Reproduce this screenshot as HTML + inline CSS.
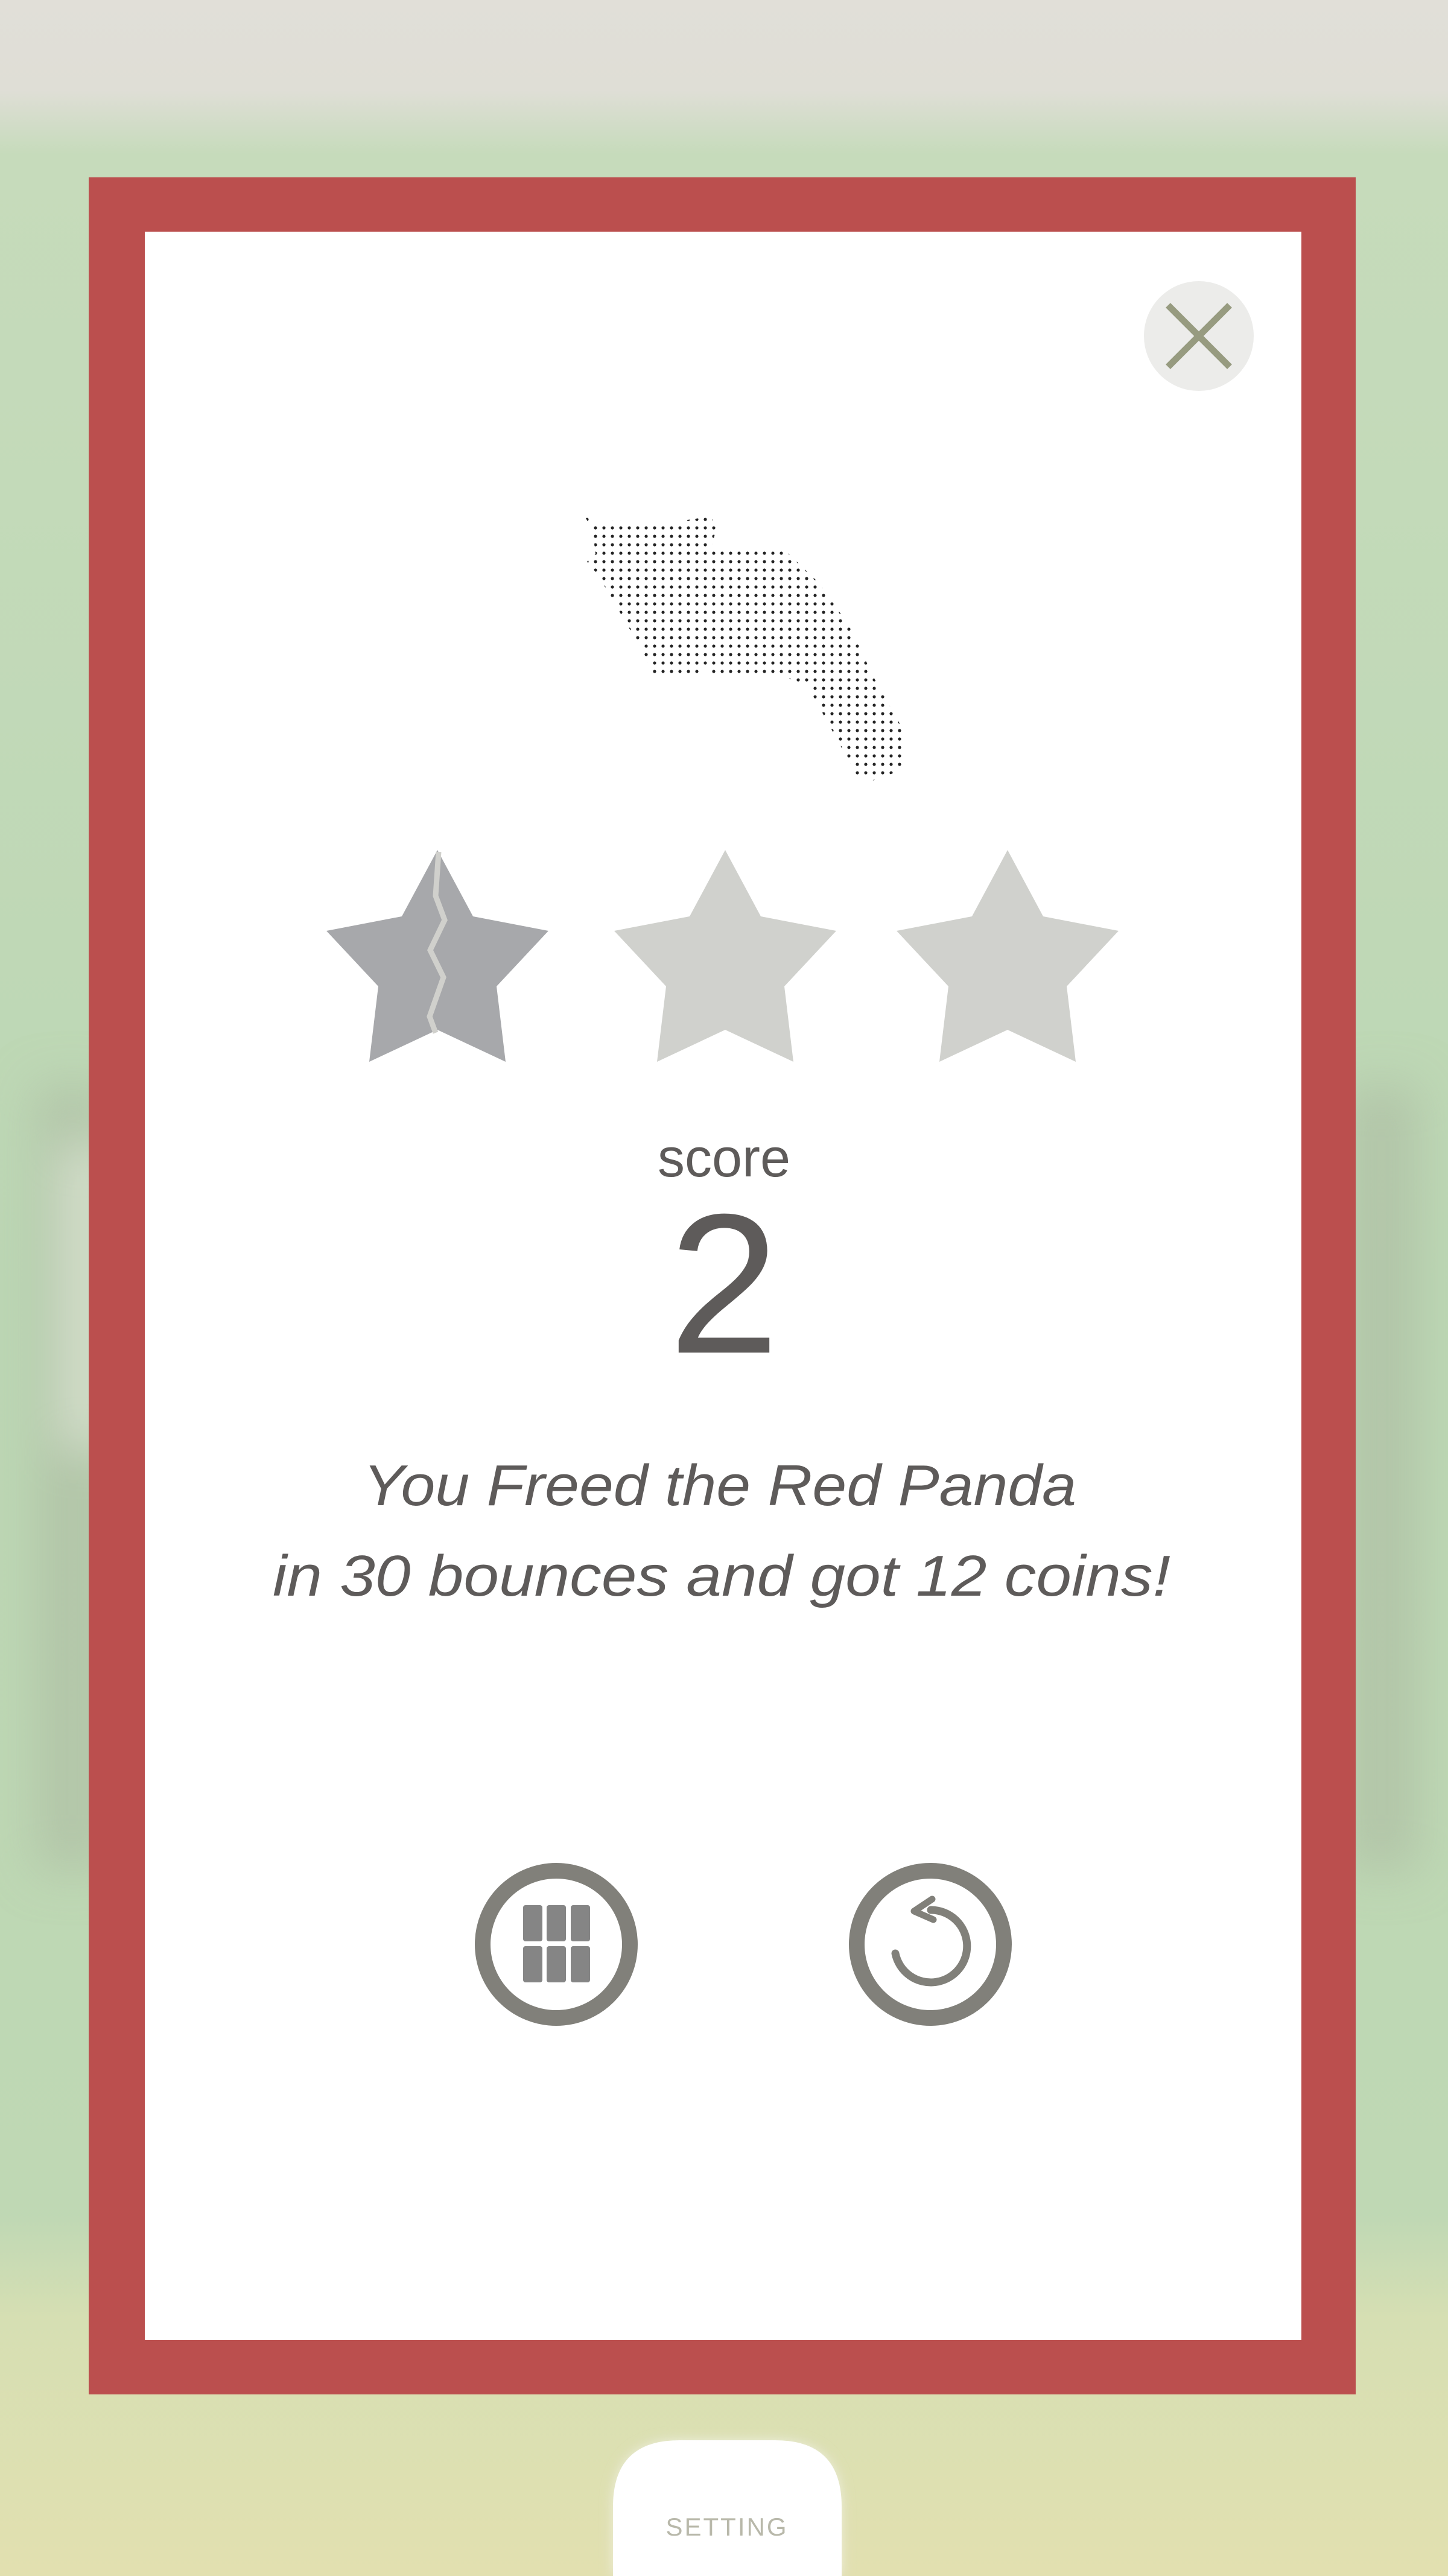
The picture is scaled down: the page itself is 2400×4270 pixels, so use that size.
<!DOCTYPE html>
<html><head><meta charset="utf-8">
<style>
html,body{margin:0;padding:0;width:2400px;height:4270px;overflow:hidden}
body{background:#c3dab8}
</style></head>
<body>
<svg width="2400" height="4270" viewBox="0 0 2400 4270" xmlns="http://www.w3.org/2000/svg" style="display:block">
<defs>
<linearGradient id="bg" x1="0" y1="0" x2="0" y2="1">
<stop offset="0" stop-color="#e1dfd8"/>
<stop offset="0.035" stop-color="#dfded6"/>
<stop offset="0.06" stop-color="#c6dbbb"/>
<stop offset="0.5" stop-color="#bcd7b4"/>
<stop offset="0.86" stop-color="#bfd8b4"/>
<stop offset="0.9" stop-color="#d6dfb3"/>
<stop offset="1" stop-color="#e2e0b0"/>
</linearGradient>
<filter id="blur"><feGaussianBlur stdDeviation="40"/></filter>
<filter id="sh"><feGaussianBlur stdDeviation="10"/></filter>
<pattern id="dots" width="14" height="14" patternUnits="userSpaceOnUse">
<circle cx="7" cy="7" r="2.6" fill="#222"/>
</pattern>
<polygon id="star" points="0,-194 59,-84 184,-60 98,32 113,157 0,104 -113,157 -98,32 -184,-60 -59,-84"/>
</defs>
<rect width="2400" height="4270" fill="url(#bg)"/>
<g filter="url(#blur)">
<rect x="60" y="1800" width="120" height="1300" fill="#aab9a0" opacity="0.6"/>
<rect x="2230" y="1800" width="120" height="1300" fill="#aab9a0" opacity="0.6"/>
<rect x="110" y="1900" width="60" height="500" fill="#e8ebe0" opacity="0.8"/>
</g>
<rect x="147" y="294" width="2100" height="3675" fill="#bb4f4e"/>
<rect x="240" y="384" width="1917" height="3495" fill="#ffffff"/>
<circle cx="1987" cy="557" r="91" fill="#ececea"/>
<path d="M1936 506 L2038 608 M2038 506 L1936 608" stroke="#979b80" stroke-width="11"/>
<path d="M969 856 L990 866 Q1000 862 1045 864 L1125 864 L1179 856 L1187 877 L1179 908 L1232 915 Q1280 905 1304 915 L1357 966 L1411 1042 L1446 1119 L1500 1215 Q1505 1260 1491 1278 L1446 1294 L1420 1285 L1339 1138 L1295 1119 L1179 1122 L1179 1093 L1161 1119 L1085 1122 L1062 1074 L991 953 L973 931 L987 918 L982 877 Z" fill="url(#dots)"/>
<use href="#star" transform="translate(725,1603)" fill="#a7a8ab"/>
<path d="M727 1412 L722 1485 L737 1525 L713 1575 L735 1620 L712 1685 L722 1712" stroke="#d0d0cc" stroke-width="9" fill="none"/>
<use href="#star" transform="translate(1202,1603)" fill="#d0d1cd"/>
<use href="#star" transform="translate(1670,1603)" fill="#d0d1cd"/>
<text x="1200" y="1950" text-anchor="middle" font-family="Liberation Sans, sans-serif" font-size="90" fill="#5e5b5a">score</text>
<text x="1200" y="2242" text-anchor="middle" font-family="Liberation Sans, sans-serif" font-size="330" fill="#5e5b5a">2</text>
<text x="602" y="2495" textLength="1182" lengthAdjust="spacingAndGlyphs" font-family="Liberation Sans, sans-serif" font-style="italic" font-size="96" fill="#5e5b5a">You Freed the Red Panda</text>
<text x="452" y="2645" textLength="1488" lengthAdjust="spacingAndGlyphs" font-family="Liberation Sans, sans-serif" font-style="italic" font-size="96" fill="#5e5b5a">in 30 bounces and got 12 coins!</text>
<circle cx="922" cy="3223" r="122" fill="none" stroke="#81807a" stroke-width="26"/>
<g fill="#858585">
<rect x="867" y="3158" width="32" height="60" rx="4"/>
<rect x="906" y="3158" width="32" height="60" rx="4"/>
<rect x="946" y="3158" width="32" height="60" rx="4"/>
<rect x="867" y="3226" width="32" height="60" rx="4"/>
<rect x="906" y="3226" width="32" height="60" rx="4"/>
<rect x="946" y="3226" width="32" height="60" rx="4"/>
</g>
<circle cx="1542" cy="3223" r="122" fill="none" stroke="#81807a" stroke-width="26"/>
<path d="M1484 3238 A60 60 0 1 0 1543 3166" fill="none" stroke="#81807a" stroke-width="13" stroke-linecap="round"/>
<path d="M1545 3148 L1515 3168 L1547 3182" fill="none" stroke="#81807a" stroke-width="11" stroke-linecap="round" stroke-linejoin="round"/>
<path d="M1016 4270 L1016 4155 Q1016 4045 1126 4045 L1285 4045 Q1395 4045 1395 4155 L1395 4270 Z" fill="#ffffff" stroke="#d8d8c8" stroke-width="4" filter="url(#sh)" opacity="0.6"/>
<path d="M1016 4270 L1016 4155 Q1016 4045 1126 4045 L1285 4045 Q1395 4045 1395 4155 L1395 4270 Z" fill="#ffffff"/>
<text x="1205" y="4203" text-anchor="middle" font-family="Liberation Sans, sans-serif" font-size="42" letter-spacing="3" fill="#b8b8aa">SETTING</text>
</svg>
</body></html>
